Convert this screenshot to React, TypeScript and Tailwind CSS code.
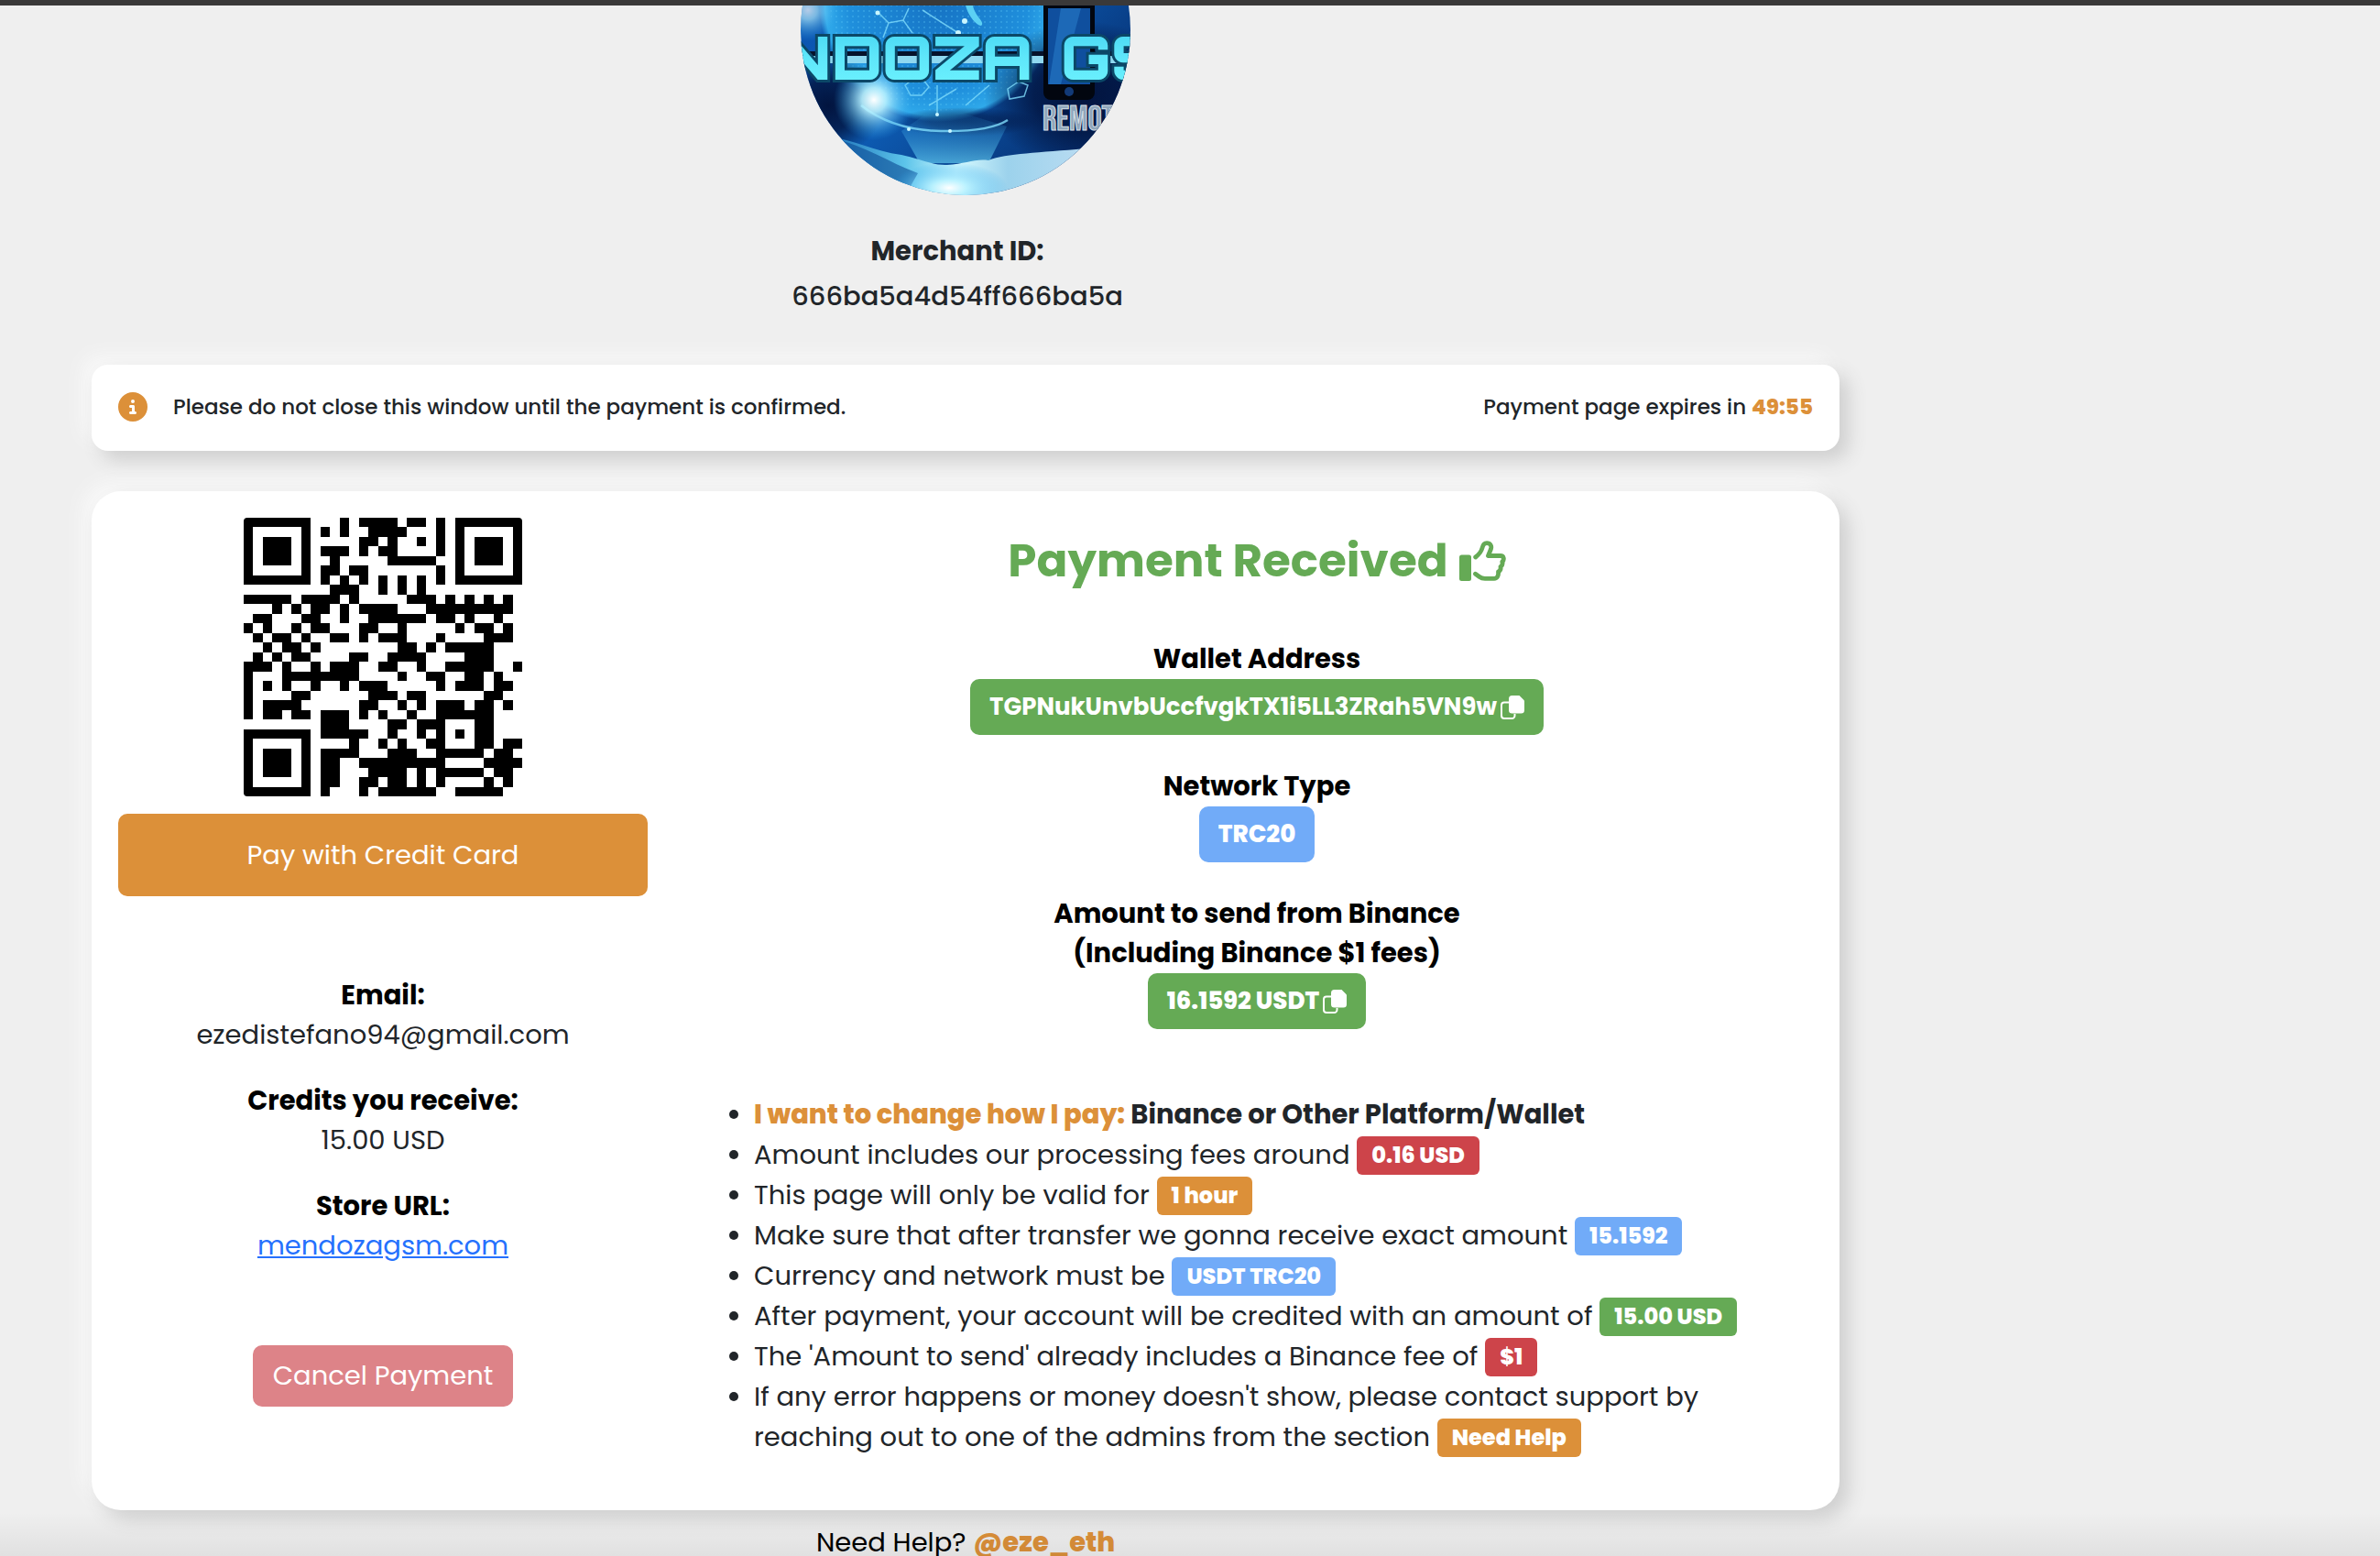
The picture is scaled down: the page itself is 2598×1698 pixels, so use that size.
import React, { useState } from 'react';
import { FaCircleInfo } from 'react-icons/fa6';

const WALLET = 'TGPNukUnvbUccfvgkTX1i5LL3ZRah5VN9w';

// dark modules of every QR row, as column ranges
const QR_ROWS = [
  '0-6 10 12-15 17-18 20 22-28',
  '0 6 8 10 13-16 20 22 28',
  '0 2-4 6 12-13 15 18 20 22 24-26 28',
  '0 2-4 6 8-10 12 14-15 20 22 24-26 28',
  '0 2-4 6 9 15-19 22 24-26 28',
  '0 6 8-9 11-12 20 22 28',
  '0-6 8 10 12 14 16 18 20 22-28',
  '9-11 14 16 18',
  '0-4 6-9 11 17-19 21 23 25 27',
  '3 5 7-8 10 12-15 19-27',
  '1-2 6-7 10 13-18 20-21 23 26',
  '0 2 5 7-8 12-13 16 22 24-25 27',
  '1 3-4 6 9-10 12 14-16 20 25-27',
  '2 4-5 7 16-17 19 21-25',
  '1 3 5-6 11-12 15-18 23-25',
  '0-2 4 7 9-11 14-15 18 21-25 28',
  '0 4-11 16 19-20 23-24 26',
  '0 2 4 7 10 12-14 20 22-24 26-27',
  '0 5-6 13-15 17-18 25-26',
  '0 2-5 12-13 16 18 20-22 24-25 27',
  '0 2-3 5-6 8-10 12 14 17 20-25',
  '8-10 15-16 18-20 24-25',
  '0-6 8-12 15 18 20 22 24-25',
  '0 6 11 14 16 19-20 24-25 27-28',
  '0 2-4 6 8-11 15-17 20-24 26-27',
  '0 2-4 6 8-9 12-20 25-28',
  '0 2-4 6 8-9 13-16 18 20-24 26-27',
  '0 6 8-9 12-13 15-16 18 20 25 27',
  '0-6 8 12 14-19 22-26',
];

const qrPath = QR_ROWS.map((row, y) =>
  row
    .split(' ')
    .map((run) => {
      const [from, to = from] = run.split('-').map(Number);
      return `M${from} ${y}h${to - from + 1}v1h${from - to - 1}z`;
    })
    .join('')
).join('');

function QrCode() {
  return (
    <svg viewBox="0 0 29 29" className="size-[304px] rounded-[4px]" shapeRendering="crispEdges" role="img" aria-label="QR code">
      <path d={qrPath} fill="#000" />
    </svg>
  );
}

function ThumbsUp() {
  return (
    <svg viewBox="0 0 51 44" className="h-[44px] w-[51px]" aria-hidden="true">
      <rect y="15.5" width="13" height="28.5" rx="2.5" fill="currentColor" />
      <path
        d="M17.7 18C21.5 15 24 12 25 8C25.8 4.500 27 2.700 30 2.700C34 2.700 35.500 6 34.500 9L31.500 16.500H45C48.500 16.500 49.500 20.500 46.800 23C47.600 25.500 46.800 27.200 45 28.500C45.500 31 44.500 33 42.500 34C43 38 41.500 41.300 38 41.300H28C25.500 41.300 24 41 22 39.500L17.500 36.200"
        fill="none"
        stroke="currentColor"
        strokeWidth="4.800"
        strokeLinecap="round"
        strokeLinejoin="round"
      />
    </svg>
  );
}

function CopyIcon() {
  return (
    <svg viewBox="0 0 26 26" className="size-[26px]" aria-hidden="true">
      <path d="M9 7.500H4a3 3 0 0 0-3 3V22a3 3 0 0 0 3 3h8.500a3 3 0 0 0 3-3v-2" fill="none" stroke="currentColor" strokeWidth="2" />
      <path d="M12.500 0H20.500L26 5.500V16a3.500 3.500 0 0 1-3.500 3.500h-10A3.500 3.500 0 0 1 9 16V3.500A3.500 3.500 0 0 1 12.500 0z" fill="currentColor" />
    </svg>
  );
}

function StoreLogo() {
  return (
    <svg viewBox="0 0 360 360" className="size-[360px] shrink-0 rounded-full" role="img" aria-label="Mendoza GSM">
      <defs>
        <linearGradient id="sky" x1="0" y1="0" x2="1" y2="1">
          <stop offset="0" stopColor="#0b4fae" />
          <stop offset="0.5" stopColor="#0d5cb4" />
          <stop offset="1" stopColor="#041f57" />
        </linearGradient>
        <radialGradient id="globe">
          <stop offset="0" stopColor="#1673c4" />
          <stop offset="0.75" stopColor="#1f8fdc" />
          <stop offset="0.95" stopColor="#2fa9ea" />
          <stop offset="1" stopColor="#2fa9ea" stopOpacity="0" />
        </radialGradient>
        <radialGradient id="flare">
          <stop offset="0" stopColor="#fff" />
          <stop offset="0.3" stopColor="#b9f2ff" stopOpacity="0.9" />
          <stop offset="1" stopColor="#27a6ee" stopOpacity="0" />
        </radialGradient>
        <radialGradient id="shade">
          <stop offset="0" stopColor="#02143f" />
          <stop offset="0.5" stopColor="#02143f" stopOpacity="0.8" />
          <stop offset="1" stopColor="#02143f" stopOpacity="0" />
        </radialGradient>
        <linearGradient id="hand" x1="0" y1="0" x2="1" y2="0">
          <stop offset="0" stopColor="#1b6fb8" />
          <stop offset="0.3" stopColor="#5cc4ea" />
          <stop offset="0.5" stopColor="#d6fbff" />
          <stop offset="0.7" stopColor="#9cd2ec" />
          <stop offset="1" stopColor="#b9dcf2" />
        </linearGradient>
        <linearGradient id="metal" x1="0" y1="0" x2="0" y2="1">
          <stop offset="0" stopColor="#3fd0f0" />
          <stop offset="0.5" stopColor="#5ee6fa" />
          <stop offset="1" stopColor="#6ff4ff" />
        </linearGradient>
        <linearGradient id="beam" x1="0" y1="1" x2="0" y2="0">
          <stop offset="0" stopColor="#6fe0ff" stopOpacity="0.6" />
          <stop offset="1" stopColor="#1f8fdc" stopOpacity="0" />
        </linearGradient>
        <pattern id="dots" width="6" height="6" patternUnits="userSpaceOnUse">
          <circle cx="3" cy="3" r="1" fill="#59c9f5" fillOpacity="0.4" />
        </pattern>
      </defs>
      <rect width="360" height="360" fill="url(#sky)" />
      <circle cx="150" cy="150" r="130" fill="url(#globe)" />
      <circle cx="150" cy="150" r="118" fill="url(#dots)" />
      <ellipse cx="30" cy="262" rx="60" ry="56" fill="url(#shade)" />
      <ellipse cx="310" cy="250" rx="110" ry="80" fill="url(#shade)" />
      <ellipse cx="180" cy="280" rx="80" ry="16" fill="url(#shade)" opacity="0.6" />
      <path d="M110 290L130 325L205 325L225 285L150 262z" fill="url(#beam)" />
      <g stroke="#7fdcfb" strokeWidth="1.5" fill="none" strokeOpacity="0.8">
        <path d="M84 160L96 172L112 169L122 183M96 172L90 188M112 169L118 156M133 158L172 183" />
        <path d="M114 240l8-6h12l6 8-8 9h-12zM226 244l12-8 10 4-4 12-16 3z" />
        <path d="M149 240v32M140 262l30-18M180 262l26-22" />
        <path d="M66 262Q100 289 153 290T226 278" strokeWidth="2.5" />
      </g>
      <path d="M180 153C184 168 196 178 198 174C200 170 190 164 188 153z" fill="#5bd0f4" />
      <g fill="#c9f6ff">
        <circle cx="84" cy="161" r="2.5" />
        <circle cx="172" cy="183" r="3" />
        <circle cx="179" cy="170" r="3" />
        <circle cx="118" cy="288" r="2" />
        <circle cx="149" cy="272" r="2" />
        <circle cx="163" cy="290" r="2" />
      </g>
      <circle cx="8" cy="158" r="34" fill="url(#flare)" opacity="0.7" />
      <circle cx="80" cy="256" r="44" fill="url(#flare)" />
      <path d="M30 296C60 300 80 312 110 316C130 320 145 328 160 327C180 326 190 320 205 322C225 314 260 314 310 309V360H40z" fill="url(#hand)" />
      <path d="M36 298C70 306 96 324 128 336L120 350C90 340 60 330 36 318z" fill="#0b4a92" opacity="0.6" />
      <ellipse cx="162" cy="352" rx="64" ry="28" fill="url(#flare)" />
      <rect y="203" width="360" height="5" fill="#06122b" />
      <rect y="208" width="360" height="8" fill="#8fd8f0" />
      <path d="M265 140h56v108a8 8 0 0 1-8 8h-40a8 8 0 0 1-8-8z" fill="#02060f" />
      <rect x="270" y="156" width="46" height="83" fill="#0f4f9e" />
      <path d="M271 239L284 156h22L284 239z" fill="#2b84cf" opacity="0.5" />
      <circle cx="293" cy="247" r="5" fill="#123a78" />
      <g
        fill="url(#metal)"
        stroke="#0b4868"
        strokeWidth="6"
        paintOrder="stroke"
        className="font-[Orbitron,'DejaVu_Sans',sans-serif] text-[66px] font-black"
      >
        <text x="33" y="234" textAnchor="end">MEN</text>
        <text x="34" y="234">DOZA</text>
        <text x="284" y="234">GSM</text>
      </g>
      <text
        x="264"
        y="289"
        fill="#8fa6bb"
        stroke="#d5dfe6"
        className="font-['Bebas_Neue',Oswald,Roboto,sans-serif] text-[38px]"
      >
        REMOTE
      </text>
    </svg>
  );
}

function Badge({ color, children }: any) {
  return (
    <span className={`inline-block rounded-md px-4 text-[24px] leading-[42px] font-extrabold text-white align-bottom ${color}`}>
      {children}
    </span>
  );
}

function Detail({ label, children }: any) {
  return (
    <div>
      <p className="font-bold text-black">{label}</p>
      <p>{children}</p>
    </div>
  );
}

export default function App() {
  const [copied, setCopied] = useState('');

  const copyToClipboard = async (text: string) => {
    try {
      await navigator.clipboard.writeText(text);
      setCopied(text);
    } catch (err) {
      console.error('Failed to copy text:', err);
    }
  };

  return (
    <div className="relative h-screen overflow-hidden border-t-[6px] border-[#3a3939] bg-[#efefef] font-[Poppins,Inter,sans-serif] text-[29px] leading-[43px] text-[#212529]">
      <div className="ml-[100px] w-full max-w-[1908px]">
        <header className="flex flex-col items-center">
          <div className="flex h-[207px] items-end overflow-hidden">
            <StoreLogo />
          </div>
          <div className="mt-[37px] pr-[18px] text-center leading-[49px]">
            <p className="font-bold">Merchant ID:</p>
            <p className="font-medium">666ba5a4d54ff666ba5a</p>
          </div>
        </header>

        <div className="mt-[50px] flex h-[94px] items-center justify-between rounded-[18px] bg-white px-[29px] pb-0.5 text-[23px] font-medium shadow-[10px_10px_20px_#cfcfcf,-10px_-10px_20px_#f8f8f8]">
          <p className="flex items-center gap-7">
            <FaCircleInfo className="size-8 text-[#dc9039]" />
            Please do not close this window until the payment is confirmed.
          </p>
          <p>
            Payment page expires in <span className="font-extrabold text-[#dc9039]">49:55</span>
          </p>
        </div>

        <main className="mt-11 grid h-[1112px] grid-cols-3 rounded-[32px] bg-white shadow-[10px_10px_20px_#cfcfcf,-10px_-10px_20px_#f8f8f8]">
          <section className="flex flex-col items-center px-[29px] pt-[29px] text-center">
            <QrCode />
            <button className="mt-[19px] h-[90px] w-full rounded-[10px] bg-[#dc9039] text-white">Pay with Credit Card</button>
            <div className="mt-[87px] flex flex-col gap-[29px]">
              <Detail label="Email:">ezedistefano94@gmail.com</Detail>
              <Detail label="Credits you receive:">15.00 USD</Detail>
              <Detail label="Store URL:">
                <a href="#" className="text-[#2571fd] underline">mendozagsm.com</a>
              </Detail>
            </div>
            <button className="mt-[87px] h-[67px] rounded-[10px] bg-[#dd8388] px-[22px] text-white">Cancel Payment</button>
          </section>

          <section className="col-span-2 px-[29px] pt-[46px]">
            <h1 className="flex items-center justify-center gap-3 text-[50px] leading-[60px] font-bold text-[#65aa55]">
              Payment Received
              <ThumbsUp />
            </h1>

            <div className="mt-14 flex flex-col items-center gap-[35px] text-center font-bold text-black">
              <div>
                <p>Wallet Address</p>
                <button
                  onClick={() => copyToClipboard(WALLET)}
                  title={copied === WALLET ? 'Copied!' : 'Copy'}
                  className="flex h-[61px] items-center gap-1 rounded-[10px] bg-[#65aa55] px-[21px] text-[26px] font-bold text-white"
                >
                  {WALLET}
                  <CopyIcon />
                </button>
              </div>
              <div>
                <p>Network Type</p>
                <span className="inline-flex h-[61px] items-center rounded-[10px] bg-[#71abf8] px-[21px] text-[26px] font-extrabold text-white">TRC20</span>
              </div>
              <div className="flex flex-col items-center">
                <p>
                  Amount to send from Binance
                  <br />
                  (Including Binance $1 fees)
                </p>
                <button
                  onClick={() => copyToClipboard('16.1592')}
                  title={copied === '16.1592' ? 'Copied!' : 'Copy'}
                  className="flex h-[61px] items-center gap-1 rounded-[10px] bg-[#65aa55] px-[21px] text-[26px] font-extrabold text-white"
                >
                  16.1592 USDT
                  <CopyIcon />
                </button>
              </div>
            </div>

            <ul className="mt-[71px] list-disc pl-[58px] leading-[44px]">
              <li className="font-bold">
                <span className="font-extrabold text-[#dc9039]">I want to change how I pay:</span> Binance or Other Platform/Wallet
              </li>
              <li>Amount includes our processing fees around <Badge color="bg-[#cd444a]">0.16 USD</Badge></li>
              <li>This page will only be valid for <Badge color="bg-[#dc9039]">1 hour</Badge></li>
              <li>Make sure that after transfer we gonna receive exact amount <Badge color="bg-[#71abf8]">15.1592</Badge></li>
              <li>Currency and network must be <Badge color="bg-[#71abf8]">USDT TRC20</Badge></li>
              <li>After payment, your account will be credited with an amount of <Badge color="bg-[#65aa55]">15.00 USD</Badge></li>
              <li>The 'Amount to send' already includes a Binance fee of <Badge color="bg-[#cd444a]">$1</Badge></li>
              <li>
                If any error happens or money doesn't show, please contact support by
                <br />
                reaching out to one of the admins from the section <Badge color="bg-[#dc9039]">Need Help</Badge>
              </li>
            </ul>
          </section>
        </main>

        <footer className="mt-3.5 text-center text-black">
          Need Help? <a href="#" className="font-extrabold text-[#dc9039]">@eze_eth</a>
        </footer>
      </div>
      <div className="pointer-events-none absolute inset-x-0 bottom-0 h-12 bg-linear-to-t from-black/6 to-transparent" />
    </div>
  );
}
